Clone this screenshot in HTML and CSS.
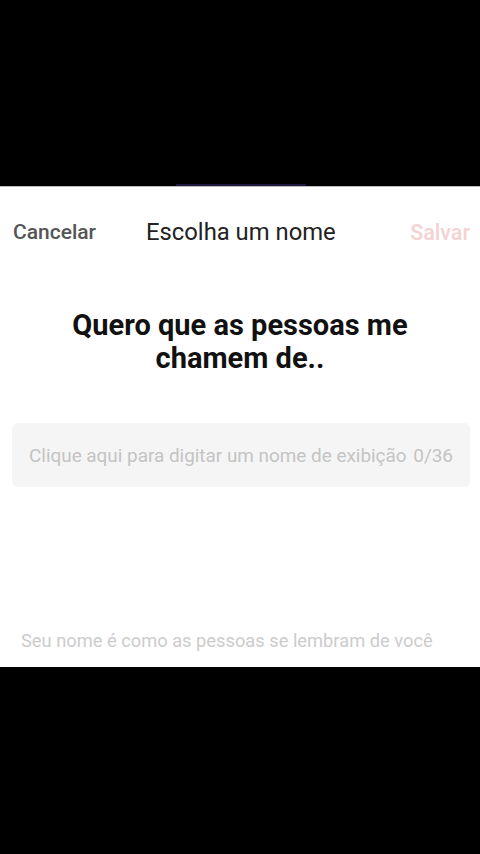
FILE: index.html
```html
<!DOCTYPE html>
<html lang="pt">
<head>
    <meta charset="UTF-8">
    <title>Escolha um nome</title>
    <meta name="viewport" content="width=device-width, initial-scale=1.0">
    <link rel="stylesheet" href="styles.css">
</head>
<body>
    <div class="top-area">
        <div class="handle"></div>
    </div>
    <div class="sheet">
        <div class="header">
            <span class="cancel">Cancelar</span>
            <span class="title">Escolha um nome</span>
            <span class="save">Salvar</span>
        </div>
        <h2 class="question">Quero que as pessoas me<br>chamem de..</h2>
        <div class="name-box">
            <span class="placeholder">Clique aqui para digitar um nome de exibição</span>
            <span class="counter">0/36</span>
        </div>
        <p class="hint">Seu nome é como as pessoas se lembram de você</p>
    </div>
</body>
</html>
```

FILE: styles.css
```css
html { box-sizing: border-box; }
*, *:before, *:after { box-sizing: inherit; }
body {
    margin: 0;
    background: #000;
    font-family: Roboto, "Noto Sans", Arial, sans-serif;
    height: 854px;
}
.top-area {
    height: 186px;
    display: flex;
    justify-content: center;
    align-items: flex-end;
}
.handle {
    width: 130px;
    height: 2px;
    background: #1c1840;
    margin-left: 2px;
}
.sheet {
    height: 481px;
    background: #fff;
    border-top: 1px solid #bcbcbc;
    display: flex;
    flex-direction: column;
}
.header {
    display: flex;
    align-items: center;
    padding: 32px 10px 0 13px;
    height: 58px;
}
.cancel {
    font-size: 21px;
    font-weight: 500;
    color: #555;
}
.title {
    font-size: 23.8px;
    color: #222;
    margin-left: 50px;
}
.save {
    font-size: 21.5px;
    font-weight: 500;
    color: #f4d2d2;
    margin-left: auto;
}
.question {
    margin: 64px 0 0;
    text-align: center;
    font-size: 29px;
    font-weight: 700;
    line-height: 33px;
    color: #111;
}
.name-box {
    margin: 48px 10px 0 12px;
    height: 64px;
    background: #f5f5f5;
    border-radius: 6px;
    display: flex;
    align-items: center;
    padding: 0 17px 0 17px;
}
.placeholder {
    font-size: 18.9px;
    color: #c4c4c4;
}
.counter {
    font-size: 18.9px;
    color: #c4c4c4;
    margin-left: auto;
}
.hint {
    margin: auto 0 16px 21px;
    font-size: 18.3px;
    color: #cccccc;
}
```
